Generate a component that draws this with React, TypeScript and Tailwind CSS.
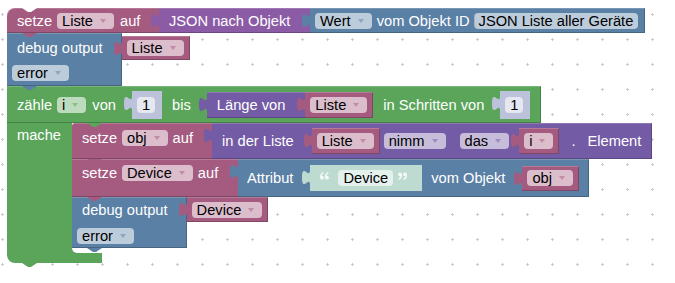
import React from "react";

const PINK = "#a55b80";
const BLUE = "#5b80a5";
const GREEN = "#5ba55b";
const LIST = "#745ba5";
const NUM = "#bdc2db";
const STR = "#bddbd1";

const EDGE = "shadow-[inset_0_1px_0_rgba(255,255,255,0.18),inset_0_-1px_0_rgba(0,0,0,0.22)]";
const EDGE_R = "shadow-[inset_0_1px_0_rgba(255,255,255,0.18),inset_-1px_-1px_0_rgba(0,0,0,0.22)]";

// puzzle tab on the left of a value block
function Tab({ fill }: { fill: string }) {
  return (
    <svg className="absolute left-[-8px] top-[5px] overflow-visible" width="8" height="15" viewBox="0 0 8 15">
      <path d="M8,0 C8,10 0,-8 0,7.5 S8,5 8,15 Z" fill={fill} />
    </svg>
  );
}

// next-statement tab under a block
function Notch({ fill, className = "" }: { fill: string; className?: string }) {
  return (
    <svg className={`absolute z-10 ${className}`} width="15" height="4" viewBox="0 0 15 4">
      <path d="M0,0 L6,4 L9,4 L15,0 Z" fill={fill} />
    </svg>
  );
}

function Drop({ label, arrow, className = "" }: { label: string; arrow: string; className?: string }) {
  return (
    <span className={`inline-flex h-[16px] shrink-0 items-center rounded-[4px] bg-white/60 pl-[5px] pr-[8px] text-black ${className}`}>
      {label}
      <svg className="ml-[7px]" width="6" height="4" viewBox="0 0 6 4">
        <path d="M0,0 H6 L3,4 Z" fill={arrow} fillOpacity="0.5" />
      </svg>
    </span>
  );
}

function VarBlock({ name, className = "" }: { name: string; className?: string }) {
  return (
    <div className={`relative flex shrink-0 items-center bg-[#a55b80] pl-[5px] pr-[6px] ${EDGE_R} ${className}`}>
      <Tab fill={PINK} />
      <Drop label={name} arrow={PINK} />
    </div>
  );
}

function NumBlock({ className = "" }: { className?: string }) {
  return (
    <div className={`relative flex h-[28px] shrink-0 items-center bg-[#bdc2db] pl-[5px] pr-[7px] ${className}`}>
      <Tab fill={NUM} />
      <span className="h-[16px] rounded-[4px] bg-white/60 px-[5px] text-black">1</span>
    </div>
  );
}

function Quote({ close = false }: { close?: boolean }) {
  return (
    <svg className={close ? "rotate-180" : ""} width="9" height="8" viewBox="0 0 9 8">
      <g fill="#f4f9f7" stroke="#f4f9f7">
        <circle cx="2" cy="5.7" r="1.9" stroke="none" />
        <path d="M0.4,5.4 Q0.6,2 3.4,0.7" fill="none" strokeWidth="1.4" />
        <circle cx="7" cy="5.7" r="1.9" stroke="none" />
        <path d="M5.4,5.4 Q5.6,2 8.4,0.7" fill="none" strokeWidth="1.4" />
      </g>
    </svg>
  );
}

export default function App() {
  return (
    <div className="relative h-[283px] w-[675px] overflow-hidden whitespace-nowrap bg-white font-['Liberation_Sans',Arial,sans-serif] text-[14.67px] leading-[16px] text-white">
      <svg className="absolute inset-0" width="675" height="283">
        <defs>
          <pattern id="grid" width="25" height="25" patternUnits="userSpaceOnUse">
            <rect x="1" y="14" width="3" height="1" fill="#cbcbcb" />
            <rect x="2" y="13" width="1" height="3" fill="#cbcbcb" />
          </pattern>
        </defs>
        <rect width="675" height="283" fill="url(#grid)" />
      </svg>

      <div className="absolute left-[7px] top-[8px] flex flex-col items-start">
        {/* setze Liste auf JSON nach Objekt */}
        <div className="flex h-[25px] items-stretch">
          <div className={`relative flex w-[152px] items-center rounded-tl-[8px] bg-[#a55b80] pl-[10px] ${EDGE}`}>
            <svg className="absolute left-[15px] top-0" width="15" height="4" viewBox="0 0 15 4">
              <path d="M0,0 L6,4 L9,4 L15,0 Z" fill="#ffffff" />
            </svg>
            <span>setze</span>
            <Drop className="ml-[5px]" label="Liste" arrow={PINK} />
            <span className="ml-[6px]">auf</span>
            <Notch fill={PINK} className="left-[15px] top-full" />
          </div>
          <div className={`relative flex w-[151px] items-center bg-[#8c5ba6] pl-[10px] ${EDGE}`}>
            <Tab fill="#8c5ba6" />
            <span>JSON nach Objekt</span>
          </div>
          <div className={`relative flex w-[335px] items-center bg-[#5b80a5] pl-[5px] ${EDGE_R}`}>
            <Tab fill={BLUE} />
            <Drop label="Wert" arrow={BLUE} />
            <span className="ml-[5px]">vom Objekt ID</span>
            <span className="ml-[4px] h-[16px] rounded-[4px] bg-white/60 px-[5px] text-black shadow-[inset_1px_0_0_rgba(0,0,0,0.12)]">
              JSON Liste aller Geräte
            </span>
          </div>
        </div>

        {/* debug output */}
        <div className={`relative flex w-[115px] flex-col items-start bg-[#5b80a5] pb-[5px] pl-[5px] pt-[3px] ${EDGE_R}`}>
          <div className="flex h-[24px] items-center">
            <span className="ml-[5px]">debug output</span>
            <VarBlock name="Liste" className="ml-[19px] h-[24px]" />
          </div>
          <Drop className="mt-[5px]" label="error" arrow={BLUE} />
          <Notch fill={BLUE} className="left-[15px] top-full" />
        </div>

        {/* for loop */}
        <div className="relative flex flex-col items-start">
          <div className={`relative flex h-[37px] w-[534px] items-center bg-[#5ba55b] pl-[10px] ${EDGE_R}`}>
            <span>zähle</span>
            <Drop className="ml-[5px]" label="i" arrow={GREEN} />
            <span className="ml-[6px]">von</span>
            <NumBlock className="ml-[16px]" />
            <span className="ml-[10px]">bis</span>
            <div className={`relative ml-[16px] flex h-[26px] items-stretch bg-[#745ba5] pl-[10px] ${EDGE}`}>
              <Tab fill={LIST} />
              <span className="self-center">Länge von</span>
              <VarBlock name="Liste" className="ml-[20px]" />
            </div>
            <span className="ml-[10px]">in Schritten von</span>
            <NumBlock className="ml-[16px]" />
          </div>

          <div className="flex items-stretch">
            <div className="w-[65px] bg-[#5ba55b] pl-[10px] pt-[4px]">mache</div>
            <div className="relative flex flex-col items-start pb-[5px]">
              <Notch fill={GREEN} className="left-[15px] top-0" />

              {/* setze obj auf in der Liste */}
              <div className="flex items-stretch">
                <div className={`relative flex h-[36px] w-[140px] items-start rounded-tl-[3px] bg-[#a55b80] pl-[10px] pt-[7px] ${EDGE}`}>
                  <span>setze</span>
                  <Drop className="ml-[5px]" label="obj" arrow={PINK} />
                  <span className="ml-[5px]">auf</span>
                  <Notch fill={PINK} className="left-[15px] top-full" />
                </div>
                <div className={`relative flex h-[36px] w-[440px] items-center bg-[#745ba5] pl-[10px] ${EDGE_R}`}>
                  <Tab fill={LIST} />
                  <span>in der Liste</span>
                  <VarBlock name="Liste" className="ml-[18px] h-[26px]" />
                  <Drop className="ml-[4px]" label="nimm" arrow={LIST} />
                  <Drop className="ml-[14px]" label="das" arrow={LIST} />
                  <VarBlock name="i" className="ml-[10px] h-[26px]" />
                  <span className="ml-[12px]">.</span>
                  <span className="ml-[12px]">Element</span>
                </div>
              </div>

              {/* setze Device auf Attribut */}
              <div className="flex items-stretch">
                <div className={`relative flex h-[38px] w-[166px] items-start bg-[#a55b80] pl-[10px] pt-[6px] ${EDGE}`}>
                  <span>setze</span>
                  <Drop className="ml-[5px]" label="Device" arrow={PINK} />
                  <span className="ml-[5px]">auf</span>
                  <Notch fill={PINK} className="left-[15px] top-full" />
                </div>
                <div className={`relative flex h-[38px] w-[351px] items-center bg-[#5b80a5] pl-[9px] ${EDGE_R}`}>
                  <Tab fill={BLUE} />
                  <span>Attribut</span>
                  <div className="relative ml-[17px] flex h-[26px] items-center bg-[#bddbd1] pl-[10px] pr-[15px]">
                    <Tab fill={STR} />
                    <span className="-mt-[4px] flex">
                      <Quote />
                    </span>
                    <span className="ml-[9px] h-[16px] rounded-[4px] bg-white/60 px-[5px] text-black">Device</span>
                    <span className="ml-[5px] -mt-[4px] flex">
                      <Quote close />
                    </span>
                  </div>
                  <span className="ml-[9px]">vom Objekt</span>
                  <VarBlock name="obj" className="ml-[17px] h-[25px]" />
                </div>
              </div>

              {/* debug output Device */}
              <div className={`relative flex w-[115px] flex-col items-start bg-[#5b80a5] pb-[4px] pl-[5px] ${EDGE_R}`}>
                <div className="flex h-[25px] items-center">
                  <span className="ml-[5px]">debug output</span>
                  <VarBlock name="Device" className="ml-[19px] h-[25px]" />
                </div>
                <Drop className="mt-[6px]" label="error" arrow={BLUE} />
                <Notch fill={BLUE} className="left-[15px] top-full" />
              </div>

              <div className="absolute bottom-0 left-0 h-[5px] w-[5px] bg-[#5ba55b]">
                <div className="h-full w-full rounded-bl-[5px] bg-white" />
              </div>
            </div>
          </div>

          <div className="h-[10px] w-[95px] rounded-bl-[8px] bg-[#5ba55b]" />
          <Notch fill={GREEN} className="left-[15px] top-full" />
        </div>
      </div>
    </div>
  );
}
